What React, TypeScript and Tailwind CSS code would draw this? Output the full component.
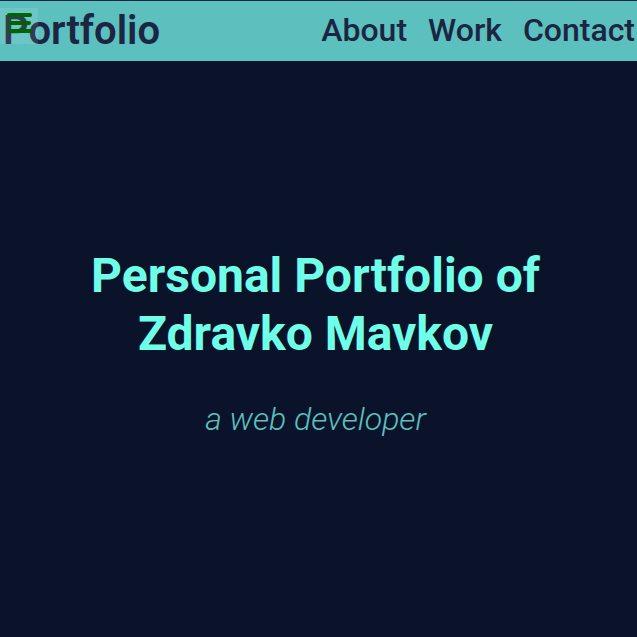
import React from 'react';

const links = ['About', 'Work', 'Contact'];

const App: React.FC = () => {
  return (
    <div className="min-h-screen bg-[#0b132b] font-['Roboto',sans-serif]">
      {/* top bar */}
      <header className="relative h-[61px] border-t border-[#1c2541] bg-[#5bc0be] flex items-center justify-between pl-[3px] pr-[2px]">
        <h1 className="text-[40px] leading-none font-semibold text-[#1c2541] mb-[1px]">Portfolio</h1>
        <nav className="flex items-center gap-[21px] mb-[3px]">
          {links.map((l) => (
            <a key={l} href="#" className="text-[32px] leading-none font-medium text-[#1c2541]">
              {l}
            </a>
          ))}
        </nav>

        {/* menu toggle */}
        <button className="absolute left-0 top-[7px] w-[38px] h-[36px] bg-white/10 flex flex-col items-start justify-start gap-[4px] pl-[7px] pt-[5px]">
          <span className="block w-[25px] h-[4px] rounded-full bg-[#006400]" />
          <span className="block w-[24px] h-[4px] rounded-full bg-[#006400]" />
          <span className="block w-[25px] h-[4px] rounded-full bg-[#006400]" />
        </button>
      </header>

      <main className="h-[576px] flex flex-col items-center justify-center pb-[8px] pr-[6px] text-center">
        <h2 className="text-[48px] leading-[1.2] font-bold text-[#6fffe9]">
          Personal Portfolio of
          <br />
          Zdravko Mavkov
        </h2>
        <p className="mt-[33px] text-[32px] leading-[1.5] font-light italic text-[#5bc0be]">a web developer</p>
      </main>
    </div>
  );
};

export default App;
